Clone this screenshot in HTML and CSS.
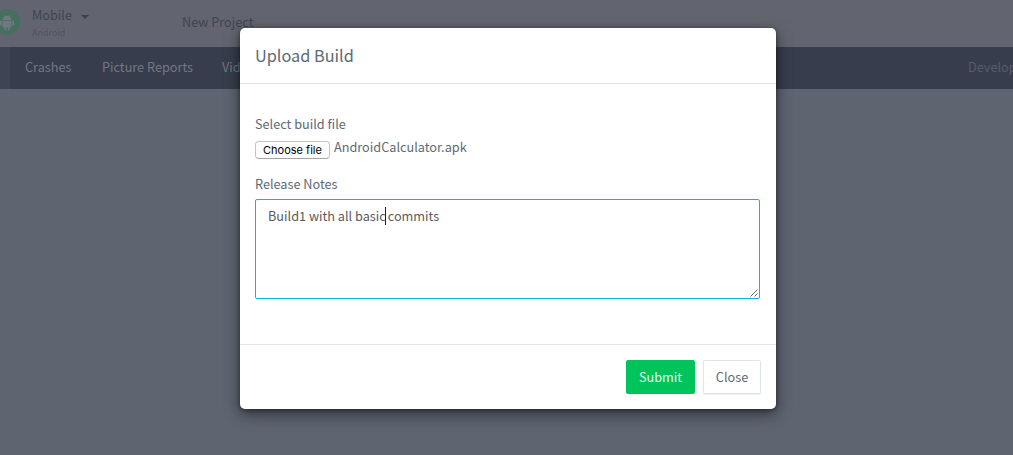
FILE: index.html
```html
<!DOCTYPE html>
<html lang="en">
<head>
<meta charset="utf-8">
<title>Upload Build</title>
<link rel="stylesheet" href="styles.css">
</head>
<body>
<header class="topbar">
  <svg class="logo" viewBox="0 0 26 26"><circle cx="13" cy="13" r="13" fill="#466f5d"/><g fill="#707881" stroke="#707881"><path stroke="none" d="M8.5 11a4.5 4.3 0 0 1 9 0zM8.5 11.8h9v5.7a1 1 0 0 1-1 1h-7a1 1 0 0 1-1-1z"/><path fill="none" stroke-width="1.8" stroke-linecap="round" d="M6.9 12.5v3.3M19.1 12.5v3.3M11.3 18v2.4M14.7 18v2.4"/><path fill="none" stroke-width=".7" d="M10 6l1.2 2M16 6l-1.2 2"/></g></svg>
  <div class="app"><div class="app-name">Mobile <i class="arrow"></i></div><div class="platform">Android</div></div>
  <div class="project">New Project</div>
</header>
<nav class="nav">
  <span class="nav-active"></span>
  <span class="crashes">Crashes</span><span class="reports">Picture Reports</span><span class="videos">Videos</span><span class="developer">Developer</span>
</nav>
<section class="modal">
  <h1 class="modal-header">Upload Build</h1>
  <div class="modal-body">
    <div class="label">Select build file</div>
    <div class="file"><button class="choose">Choose file</button><span class="filename">AndroidCalculator.apk</span></div>
    <div class="label">Release Notes</div>
    <div class="notes"><span>Build1 with all basic</span><i class="caret"></i><span>commits</span>
      <svg class="grip" viewBox="0 0 8 8"><path d="M.5 7.5l7-7M4.5 7.5l3-3" stroke="#555" stroke-width=".9"/></svg>
    </div>
  </div>
  <footer class="modal-footer"><button class="btn submit">Submit</button><button class="btn close">Close</button></footer>
</section>
</body>
</html>
```
FILE: styles.css
```css
* { box-sizing: border-box; }
body { margin: 0; height: 455px; overflow: hidden; background: #5e6470; font: 12.7px/20px "Noto Sans CJK SC", "Open Sans", sans-serif; color: #5d6b73; }
button { font: inherit; }
.topbar { height: 47px; background: #62656f; display: flex; color: #3f4452; }
.logo { width: 26px; height: 26px; margin: 9px 0 0 -6px; flex: none; }
.app { margin: 5px 0 0 12px; width: 150px; }
.app-name { display: flex; align-items: center; }
.arrow { margin: 3px 0 0 9px; border: 4px solid transparent; border-top-color: #3b404f; border-bottom: 0; }
.platform { font-size: 9px; line-height: 16px; color: #50545f; }
.project { margin-top: 12px; }
.nav { height: 42px; background: #373d4c; display: flex; line-height: 40px; color: #717883; white-space: nowrap; overflow: hidden; }
.nav > * { flex: none; }
.nav-active { width: 10px; background: #3e4454; }
.crashes { margin-left: 15px; width: 77px; }
.reports { width: 120px; }
.videos { width: 746px; }
.developer { color: #565c6a; }
.modal { position: absolute; left: 240px; top: 28px; width: 536px; height: 381px; background: #fff; border-radius: 5px; box-shadow: 0 5px 15px rgba(0,0,0,.5), 0 1px 4px rgba(0,0,0,.4); display: flex; flex-direction: column; }
.modal-header { margin: 0; height: 56px; padding: 0 15px; border-bottom: 1px solid #e3e4e5; font-weight: 400; font-size: 16.3px; line-height: 55px; }
.modal-body { padding: 30px 16px 0 15px; flex: 1; }
.label { height: 20px; }
.file { display: flex; height: 40px; }
.choose { width: 75px; height: 18px; margin: 7px 4px 0 0; padding: 0; border: 1px solid #c3c3c3; border-bottom-color: #a5a5a5; border-radius: 4px; background: #fff; color: #000; font: 11px/16px Inter, sans-serif; }
.filename { line-height: 26px; }
.notes { position: relative; width: 505px; height: 100px; margin-top: 5px; padding: 6px 12px; border: 1px solid #10b5dc; border-radius: 2px; display: flex; color: #5b5b5b; }
.caret { width: 1px; height: 18px; margin: 1px 2px 0 -1px; background: #222; }
.grip { position: absolute; right: 1px; bottom: 1px; width: 8px; height: 8px; }
.modal-footer { height: 65px; padding: 15px; border-top: 1px solid #e3e4e5; display: flex; justify-content: flex-end; gap: 8px; }
.btn { height: 34px; padding: 0; border-radius: 2px; }
.submit { width: 69px; border: 0; background: #00c35b; color: #e6f9ee; }
.close { width: 58px; border: 1px solid #dee5e7; background: #fff; color: #5d6b73; box-shadow: 0 1px 1px rgba(90,90,90,.1); }
```
